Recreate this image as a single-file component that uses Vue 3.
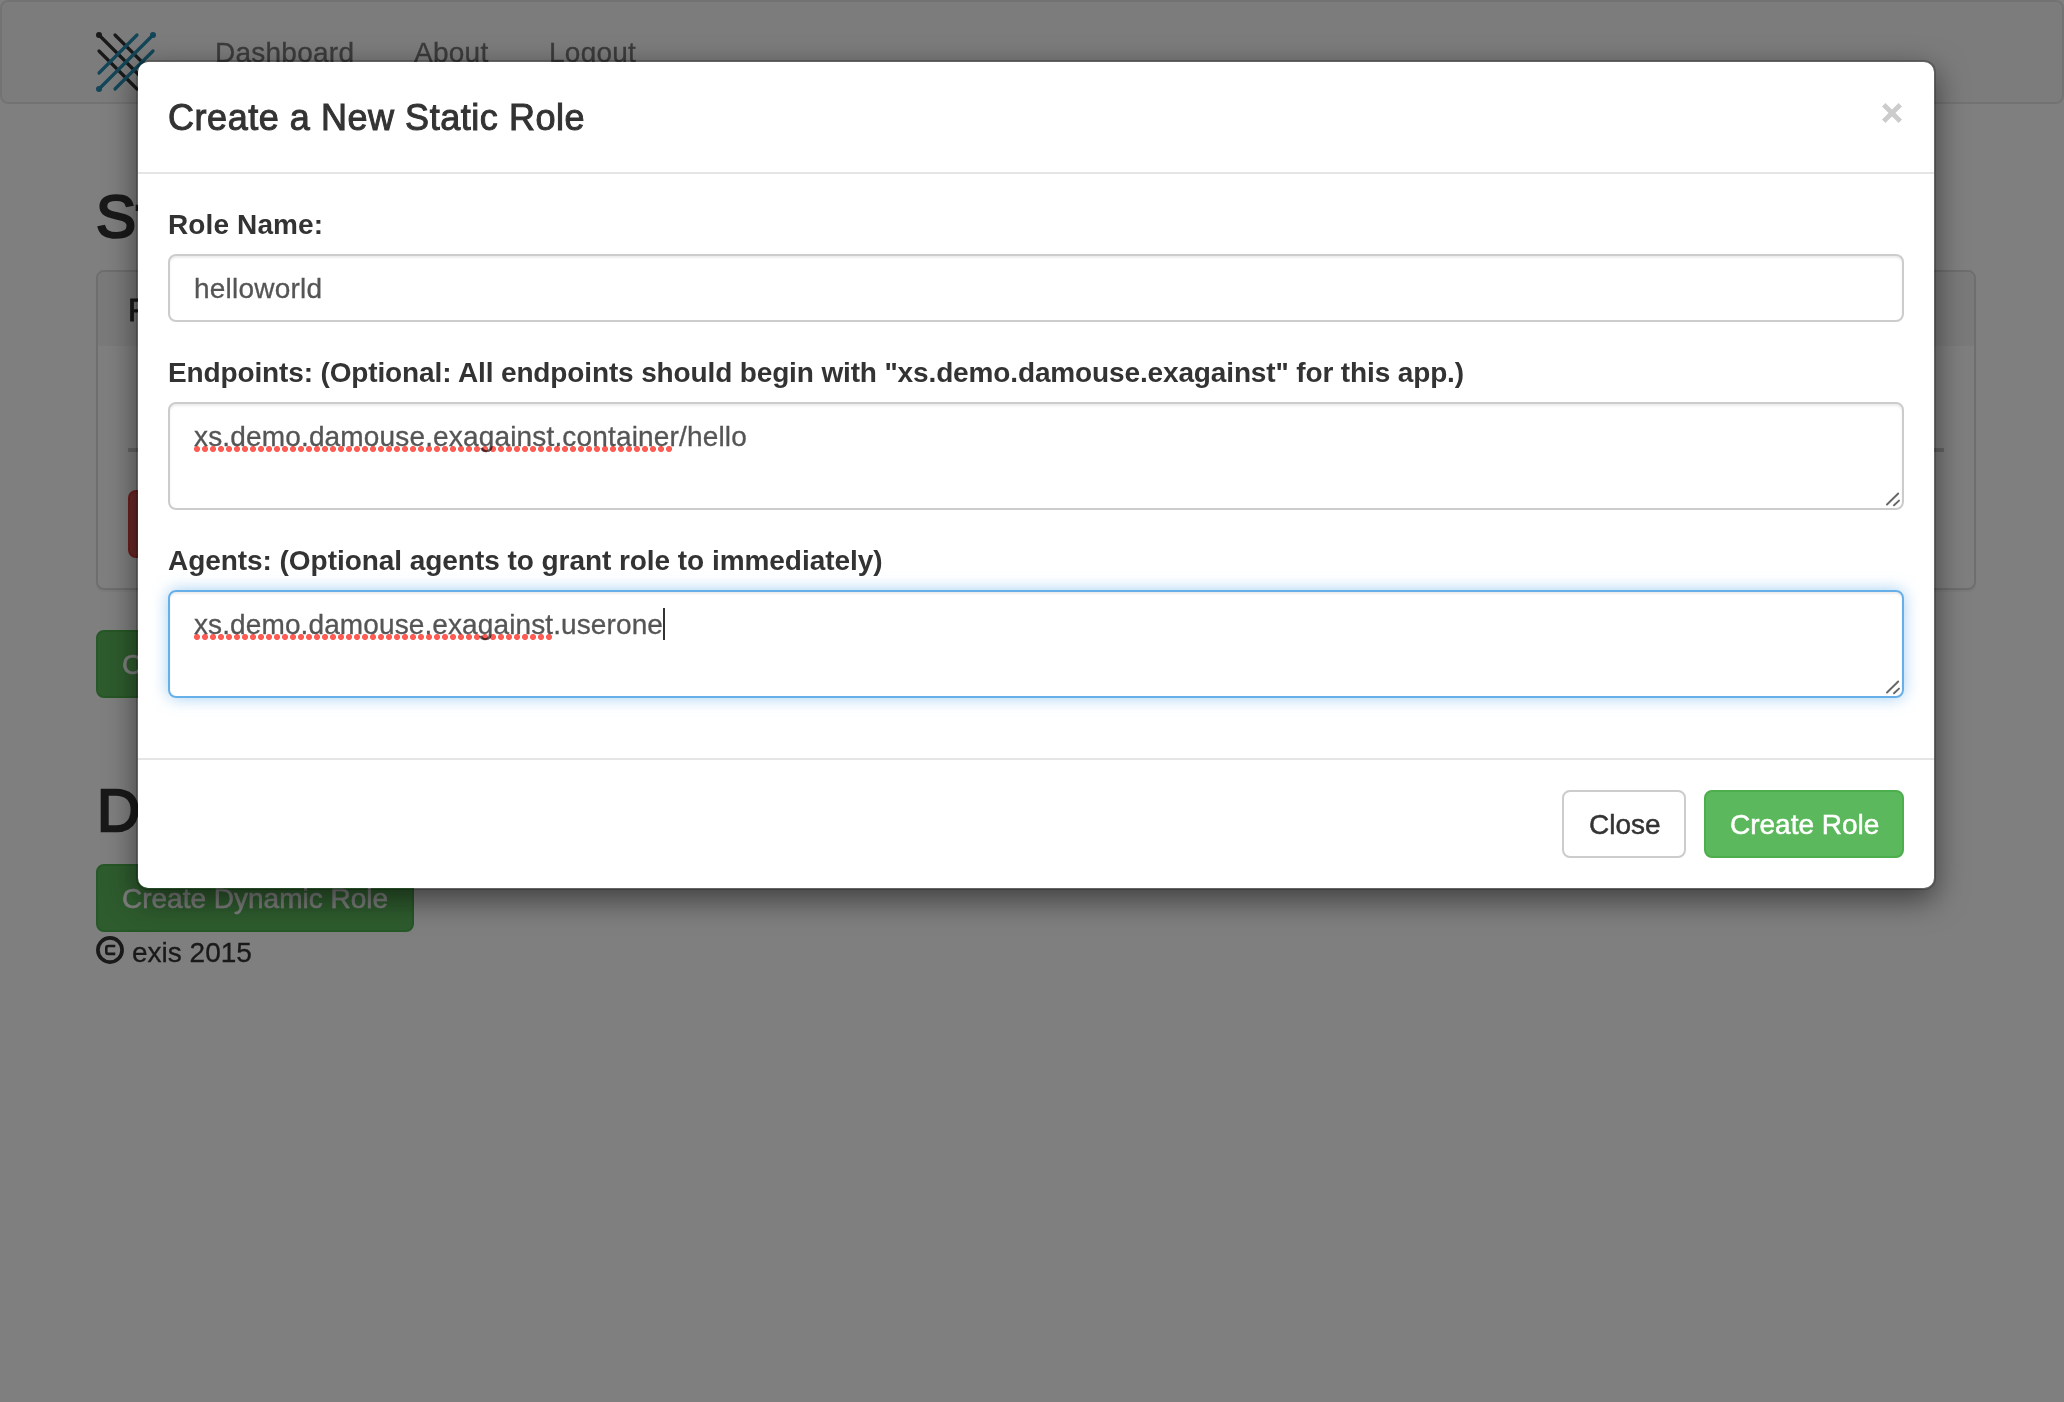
<script setup>
import { ref } from 'vue'

const links = [
  { text: 'Dashboard', cls: 'dash' },
  { text: 'About', cls: 'about' },
  { text: 'Logout', cls: 'logout' },
]
const roleName = ref('helloworld')
</script>

<template>
  <div class="screen">
    <div class="page">
      <nav class="navbar">
        <svg class="logo" width="60" height="60" viewBox="0 0 60 60" fill="none" stroke-width="3.2" stroke-linecap="round">
          <g stroke="#333"><path d="M3 3 57 57M19 3 57 41M3 19 41 57" /></g>
          <g stroke="#278cb0"><path d="M3 57 57 3M3 41 41 3M19 57 57 19" /></g>
          <g fill="#333"><circle cx="3" cy="3" r="3" /><circle cx="57" cy="57" r="3" /></g>
          <g fill="#278cb0"><circle cx="3" cy="57" r="3" /><circle cx="57" cy="3" r="3" /></g>
        </svg>
        <a v-for="l in links" :key="l.text" :class="l.cls"><span>{{ l.text }}</span></a>
      </nav>
      <main class="container">
        <h2>Static Roles</h2>
        <section class="panel">
          <div class="panel-heading">Roles</div>
          <div class="panel-body">
            <hr />
            <button class="btn danger">Delete</button>
          </div>
        </section>
        <button class="btn success">Create Static Role</button>
        <h2 class="dynamic">Dynamic Roles</h2>
        <button class="btn success wide"><span>Create Dynamic Role</span></button>
        <footer>
          <svg width="28" height="28" viewBox="0 0 28 28" fill="none" stroke="#333">
            <circle cx="14" cy="14" r="12.1" stroke-width="3.7" />
            <path d="M19.3 10H12.3Q10.3 10 10.3 12V15.9Q10.3 17.9 12.3 17.9H19.3" stroke-width="2.6" />
          </svg>
          <span>exis 2015</span>
        </footer>
      </main>
    </div>

    <div class="backdrop">
      <div class="modal">
        <header class="modal-header">
          <h4><span>Create a New Static Role</span></h4>
          <button class="close" aria-label="Close">
            <svg width="20" height="20" viewBox="0 0 20 20"><path d="M1.7 1.7 18.3 18.3M18.3 1.7 1.7 18.3" stroke="#ccc" stroke-width="4.8" /></svg>
          </button>
        </header>
        <div class="modal-body">
          <div class="group">
            <label><span class="l1">Role Name:</span></label>
            <div class="control"><span class="t0">{{ roleName }}</span></div>
          </div>
          <div class="group">
            <label><span class="l2">Endpoints: (Optional: All endpoints should begin with "xs.demo.damouse.exagainst" for this app.)</span></label>
            <div class="control area">
              <span class="t1"><span class="misspelled">xs.demo.damouse.exagainst.container</span>/hello</span>
              <svg class="grip" width="16" height="16" viewBox="0 0 16 16"><path d="M2 13.5 13.2 2.5M9 14.3 14 9.6" stroke="#666" stroke-width="1.9" stroke-linecap="round" /></svg>
            </div>
          </div>
          <div class="group">
            <label><span class="l3">Agents: (Optional agents to grant role to immediately)</span></label>
            <div class="control area focused">
              <span class="t2"><span class="misspelled">xs.demo.damouse.exagainst</span>.userone</span><i class="caret"></i>
              <svg class="grip" width="16" height="16" viewBox="0 0 16 16"><path d="M2 13.5 13.2 2.5M9 14.3 14 9.6" stroke="#666" stroke-width="1.9" stroke-linecap="round" /></svg>
            </div>
          </div>
        </div>
        <div class="modal-footer">
          <button class="btn default"><span>Close</span></button>
          <button class="btn success create"><span>Create Role</span></button>
        </div>
      </div>
    </div>
  </div>
</template>

<style>
body {
  margin: 0;
  overflow: hidden;
}
</style>

<style scoped>
* {
  box-sizing: border-box;
}
.screen {
  position: relative;
  width: 2064px;
  height: 1402px;
  overflow: hidden;
  background: #fff;
  color: #333;
  font: 28px/40px "Liberation Sans", Arial, sans-serif;
}
.navbar {
  display: flex;
  align-items: flex-start;
  height: 104px;
  padding: 30px 0 0 94px;
  border: 2px solid #e7e7e7;
  border-radius: 8px;
  background: #f8f8f8;
}
.navbar a {
  padding-top: 1px;
  color: #777;
  white-space: nowrap;
  letter-spacing: 0.25px;
  -webkit-text-stroke: 0.3px #777;
}
.dash {
  margin-left: 59px;
  width: 199px;
}
.about {
  width: 135px;
}
.container {
  width: 1880px;
  margin: 0 auto;
  margin-left: 96px;
}
h2 {
  margin: 0;
  padding-top: 80px;
  height: 166px;
  font-size: 60px;
  line-height: 66px;
  font-weight: 400;
  -webkit-text-stroke: 2.4px #333;
}
.dynamic {
  padding-left: 1px;
}
.panel {
  height: 320px;
  border: 2px solid #ddd;
  border-radius: 8px;
  box-shadow: 0 2px 2px rgba(0, 0, 0, 0.05);
  overflow: hidden;
  margin-bottom: 40px;
}
.panel-heading {
  height: 74px;
  padding: 20px 30px;
  line-height: 36px;
  font-size: 32px;
  background: #f5f5f5;
  -webkit-text-stroke: 0.8px #333;
}
.panel-body {
  padding: 102px 30px 0;
}
hr {
  height: 4px;
  margin: 0 0 38px;
  border: 0;
  background: #ccc;
}
.btn {
  display: flex;
  align-items: center;
  height: 68px;
  padding: 2px 24px 0;
  border: 2px solid #ccc;
  border-radius: 8px;
  background: #fff;
  color: #333;
  font: inherit;
  white-space: nowrap;
  -webkit-text-stroke: 0.5px currentColor;
}
.success {
  color: #fff;
  background: #5cb85c;
  border-color: #4cae4c;
}
.danger {
  color: #fff;
  background: #d9534f;
  border-color: #d43f3a;
}
.wide {
  width: 318px;
}
footer {
  display: flex;
  align-items: flex-start;
  gap: 8px;
  padding-top: 4px;
}
footer span {
  line-height: 34px;
  -webkit-text-stroke: 0.3px #333;
}
.backdrop {
  position: absolute;
  inset: 0;
  padding-top: 60px;
  background: rgba(0, 0, 0, 0.5);
}
.modal {
  width: 1800px;
  height: 830px;
  margin-left: 136px;
  border: 2px solid rgba(0, 0, 0, 0.2);
  border-radius: 12px;
  background: #fff;
  background-clip: padding-box;
  box-shadow: 0 10px 30px rgba(0, 0, 0, 0.5);
}
.modal-header {
  display: flex;
  justify-content: space-between;
  height: 112px;
  padding: 30px;
  border-bottom: 2px solid #e5e5e5;
}
h4 {
  margin: 0;
  padding-top: 1px;
  font-size: 36px;
  line-height: 50px;
  font-weight: 400;
  letter-spacing: 0.54px;
  -webkit-text-stroke: 1px #333;
}
.close {
  display: flex;
  width: 20px;
  height: 20px;
  margin: 11px 2px 0 0;
  padding: 0;
  border: 0;
  background: none;
}
.modal-body {
  height: 584px;
  padding: 30px;
}
.group {
  margin-bottom: 30px;
}
label {
  display: block;
  height: 40px;
  padding-top: 1px;
  margin-bottom: 10px;
  font-weight: 700;
  white-space: nowrap;
}
.l1 {
  letter-spacing: 0.12px;
}
.l2 {
  letter-spacing: -0.135px;
}
.l3 {
  letter-spacing: -0.05px;
}
.control {
  position: relative;
  display: flex;
  height: 68px;
  padding: 13px 24px 11px;
  border: 2px solid #ccc;
  border-radius: 8px;
  color: #555;
  white-space: nowrap;
  box-shadow: inset 0 2px 2px rgba(0, 0, 0, 0.075);
  -webkit-text-stroke: 0.3px #555;
}
.t0 {
  letter-spacing: 0.22px;
}
.t1 {
  letter-spacing: 0.16px;
}
.t2 {
  letter-spacing: 0.11px;
}
.area {
  height: 108px;
}
.focused {
  border-color: #66afe9;
  box-shadow: inset 0 2px 2px rgba(0, 0, 0, 0.075), 0 0 16px rgba(102, 175, 233, 0.6);
}
.misspelled {
  position: relative;
  display: inline-block;
  height: 40px;
}
.misspelled::after {
  content: "";
  position: absolute;
  top: 29px;
  left: 0;
  right: 0;
  height: 6px;
  background: radial-gradient(circle at 3px 3px, #ff5c54 2.6px, transparent 3.5px) 0 0 / 8px 6px repeat-x;
  mix-blend-mode: multiply;
}
.t1 .misspelled::after {
  right: 6px;
}
.caret {
  width: 2px;
  height: 32px;
  margin-top: 3px;
  background: #333;
}
.grip {
  position: absolute;
  right: 1px;
  bottom: 1px;
}
.modal-footer {
  display: flex;
  justify-content: flex-end;
  gap: 18px;
  padding: 30px;
  border-top: 2px solid #e5e5e5;
}
.default {
  width: 124px;
  padding-left: 25px;
}
.create {
  width: 200px;
}
</style>
